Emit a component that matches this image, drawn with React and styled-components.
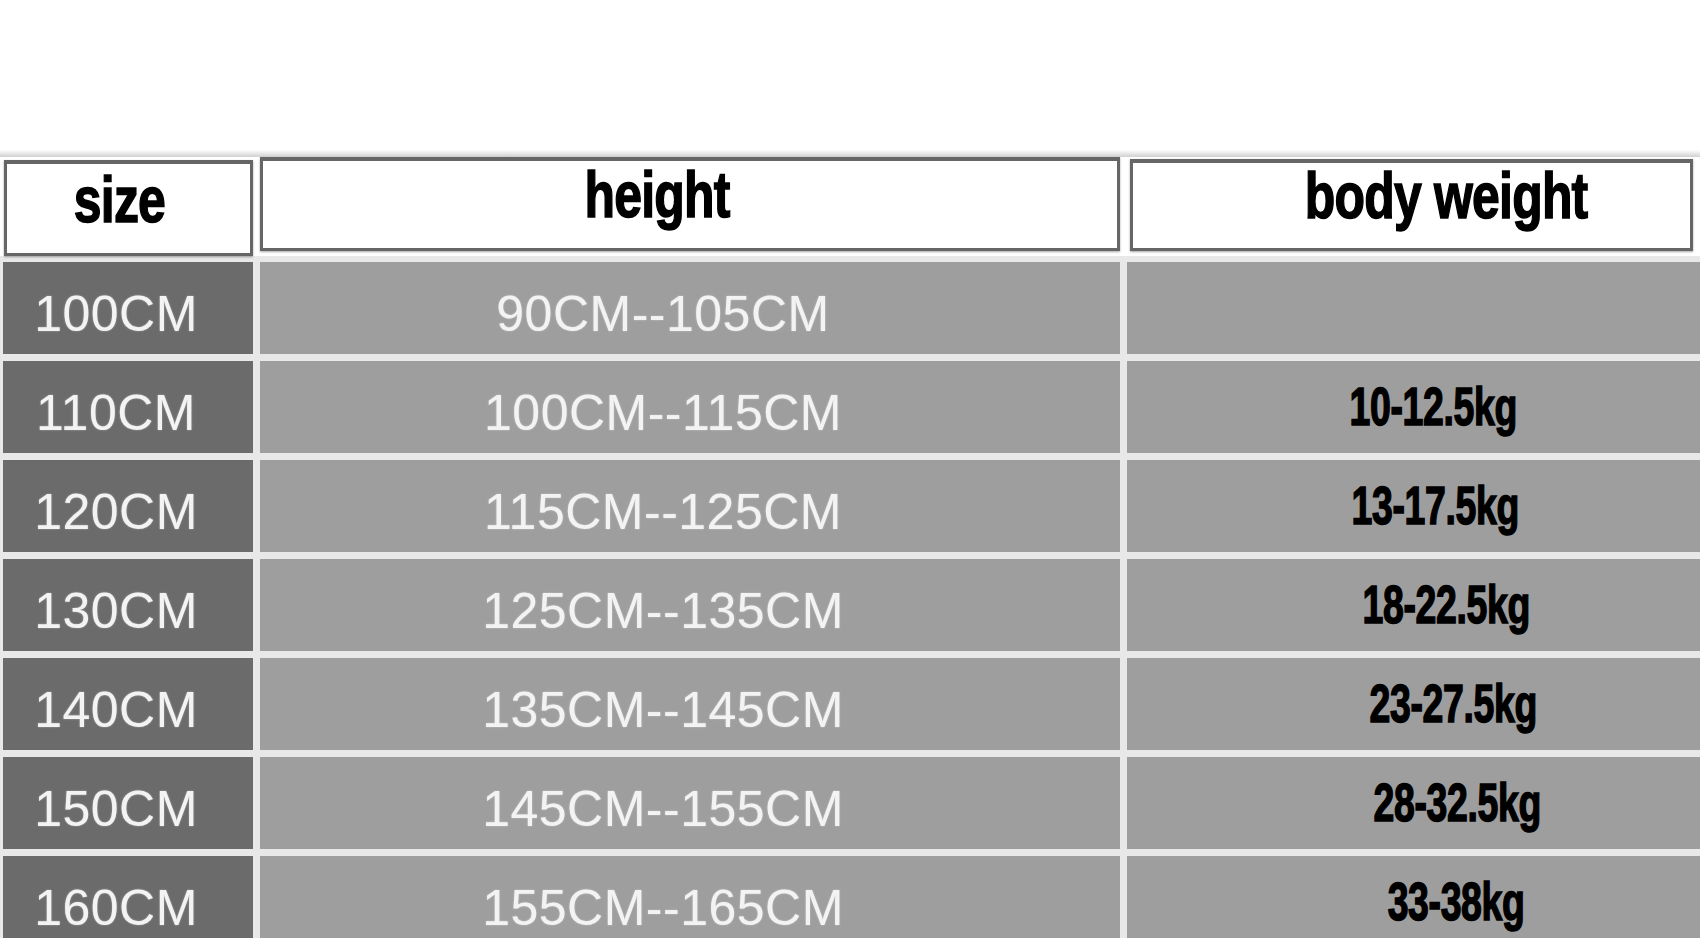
import React from "react";
import styled, { createGlobalStyle } from "styled-components";

const GlobalStyle = createGlobalStyle`
  html, body {
    margin: 0;
    padding: 0;
    background: #ffffff;
    overflow: hidden;
  }
  body {
    font-family: "Liberation Sans", Arial, sans-serif;
  }
`;

const rows = [
  { size: "100CM", height: "90CM--105CM", weight: "", shift: 0 },
  { size: "110CM", height: "100CM--115CM", weight: "10-12.5kg", shift: 20 },
  { size: "120CM", height: "115CM--125CM", weight: "13-17.5kg", shift: 22 },
  { size: "130CM", height: "125CM--135CM", weight: "18-22.5kg", shift: 33 },
  { size: "140CM", height: "135CM--145CM", weight: "23-27.5kg", shift: 40 },
  { size: "150CM", height: "145CM--155CM", weight: "28-32.5kg", shift: 44 },
  { size: "160CM", height: "155CM--165CM", weight: "33-38kg", shift: 43 },
];

const Page = styled.div`
  width: 1700px;
  height: 938px;
  padding-top: 150px;
  box-sizing: border-box;
  overflow: hidden;
`;

const TopRule = styled.div`
  height: 7px;
  background: linear-gradient(#ffffff, #e2e2e2 60%, #d0d0d0);
`;

const Columns = `
  display: grid;
  grid-template-columns: 250px 860px 573px;
  column-gap: 7px;
  padding-left: 3px;
`;

const HeaderRow = styled.div`
  ${Columns}
  height: 99px;
  background: #ffffff;
`;

const HeadCell = styled.div`
  box-sizing: border-box;
  margin: ${(p) => p.$margin || "0"};
  border: 3px solid #666666;
  border-top-width: 4px;
  background: #ffffff;
  display: flex;
  align-items: center;
  justify-content: center;
  padding-left: ${(p) => Math.max(0, p.$shift * 2)}px;
  padding-right: ${(p) => Math.max(0, -p.$shift * 2)}px;
  padding-bottom: ${(p) => p.$lift || 0}px;
  box-shadow: 0 1px 2px rgba(0, 0, 0, 0.35);
`;

const HeadText = styled.span`
  display: inline-block;
  font-family: "Liberation Sans", Arial, sans-serif;
  font-weight: 700;
  font-size: 64px;
  line-height: 1;
  color: #000000;
  white-space: nowrap;
  transform: scale(0.78, 1.02);
  letter-spacing: -1px;
  -webkit-text-stroke: 1.5px #000000;
`;

const Body = styled.div`
  ${Columns}
  grid-auto-rows: 92px;
  row-gap: 7px;
  padding-top: 6px;
  background: #e8e8e8;
`;

const Cell = styled.div`
  background: ${(p) => (p.$dark ? "#6b6b6b" : "#9e9e9e")};
  display: flex;
  align-items: center;
  justify-content: center;
  padding-left: ${(p) => Math.max(0, p.$shift * 2)}px;
  padding-right: ${(p) => Math.max(0, -p.$shift * 2)}px;
  padding-top: ${(p) => p.$drop || 0}px;
  box-sizing: border-box;
`;

const LightText = styled.span`
  font-family: "Liberation Sans", Arial, sans-serif;
  font-size: 50px;
  line-height: 1;
  color: #f3f3f3;
  letter-spacing: 0.5px;
  white-space: nowrap;
  text-shadow: 0 0 2px rgba(255, 255, 255, 0.45);
`;

const WeightText = styled.span`
  display: inline-block;
  font-family: "Liberation Sans", Arial, sans-serif;
  font-weight: 700;
  font-size: 52px;
  line-height: 1;
  color: #000000;
  white-space: nowrap;
  letter-spacing: -0.5px;
  transform: scale(0.72, 1.02);
  -webkit-text-stroke: 1.5px #000000;
`;

export default function App() {
  return (
    <>
      <GlobalStyle />
      <Page>
        <TopRule />
        <HeaderRow>
          <HeadCell $shift={-9} $lift={17} $margin="3px 0 0 1px">
            <HeadText>size</HeadText>
          </HeadCell>
          <HeadCell $shift={-33} $lift={20} $margin="0 0 5px 0">
            <HeadText>height</HeadText>
          </HeadCell>
          <HeadCell $shift={35} $lift={20} $margin="2px 7px 5px 3px">
            <HeadText>body weight</HeadText>
          </HeadCell>
        </HeaderRow>
        <Body>
          {rows.map((row) => (
            <React.Fragment key={row.size}>
              <Cell $dark $shift={-12} $drop={11}>
                <LightText>{row.size}</LightText>
              </Cell>
              <Cell $shift={-27} $drop={11}>
                <LightText>{row.height}</LightText>
              </Cell>
              <Cell $shift={row.shift}>
                <WeightText>{row.weight}</WeightText>
              </Cell>
            </React.Fragment>
          ))}
        </Body>
      </Page>
    </>
  );
}
